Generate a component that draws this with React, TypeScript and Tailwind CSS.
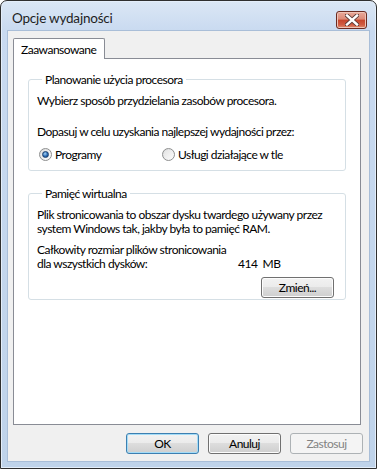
import React from "react";

const font = { fontFamily: 'Lato, "Noto Sans", sans-serif' };

function Radio({ checked, label }: { checked?: boolean; label: string }) {
  return (
    <label className="flex items-center gap-[3px]">
      <span className="relative flex h-[13px] w-[13px] items-center justify-center rounded-full border border-[#8e8f8f] bg-gradient-to-br from-[#d9dadb] to-[#ffffff]">
        <span className="h-[9px] w-[9px] rounded-full bg-gradient-to-br from-[#e4e4e4] to-[#fafafa] flex items-center justify-center">
          {checked && (
            <span className="h-[7px] w-[7px] rounded-full border border-[#1a3f6e] bg-[radial-gradient(circle_at_40%_35%,#a9d5f5,#2a6bb5_55%,#12407a)]" />
          )}
        </span>
      </span>
      <span>{label}</span>
    </label>
  );
}

function Button({
  children,
  def,
  disabled,
  className = "",
}: {
  children: React.ReactNode;
  def?: boolean;
  disabled?: boolean;
  className?: string;
}) {
  if (disabled) {
    return (
      <div
        className={`flex h-[21px] w-[73px] items-center justify-center rounded-[3px] border border-[#adb2b5] bg-[#f4f4f4] text-[#838383] ${className}`}
      >
        {children}
      </div>
    );
  }
  return (
    <div
      className={`flex h-[21px] w-[73px] items-center justify-center rounded-[3px] border ${
        def ? "border-[#3c7fb1] shadow-[inset_0_0_0_1px_#a4dcf7]" : "border-[#707070] shadow-[inset_0_0_0_1px_#fcfcfc]"
      } bg-[linear-gradient(#f2f2f2_0%,#ebebeb_49%,#dddddd_50%,#cfcfcf_100%)] text-black ${className}`}
    >
      {children}
    </div>
  );
}

export default function App() {
  return (
    <div style={font} className="h-[469px] w-[377px] whitespace-nowrap text-[12px] leading-[15px] tracking-[-0.5px] text-black">
      <div className="flex h-full w-full flex-col rounded-t-[7px] border border-[#2f2f2f] bg-[linear-gradient(#dbe7f5_0px,#c9daf0_30px,#bfd3ea_100%)] shadow-[inset_0_0_0_1px_#e4eefa]">
        {/* title bar */}
        <div className="flex h-[29px] shrink-0 items-center justify-between pl-[11px] pr-[9px]">
          <span className="mt-[4px] text-[13.5px] leading-[16px] tracking-[-0.2px] text-[#1e1e1e]">Opcje wydajności</span>
          <div className="mt-[8px] flex h-[18px] w-[31px] items-center justify-center rounded-[3px] border border-[#6b2a20] bg-[linear-gradient(#e9a99a_0%,#dc8a77_45%,#c6452b_50%,#d15c43_80%,#e08f6e_100%)] shadow-[inset_0_0_0_1px_#eec3b6]">
            <svg width="14" height="12" viewBox="0 0 14 12">
              <path d="M2 1.5 L12 10.5 M12 1.5 L2 10.5" stroke="#5a3a36" strokeWidth="4.2" strokeLinecap="square" />
              <path d="M2 1.5 L12 10.5 M12 1.5 L2 10.5" stroke="#ffffff" strokeWidth="2.4" strokeLinecap="square" />
            </svg>
          </div>
        </div>
        {/* client */}
        <div className="mx-[6px] mb-[6px] flex flex-1 flex-col border border-[#a9bed8] bg-[#f0f0f0] px-[5px] pt-[6px]">
          {/* tab strip */}
          <div className="flex h-[21px] items-end">
            <div className="relative z-10 -mb-px flex h-[21px] w-[92px] items-start rounded-t-[2px] border border-b-0 border-[#898c95] bg-white pl-[7px] pt-[3px]">
              Zaawansowane
            </div>
          </div>
          {/* panel */}
          <div className="flex h-[367px] w-[348px] flex-col border border-[#898c95] bg-white px-[14px] pt-[13px]">
            <fieldset className="h-[99px] rounded-[3px] border border-[#d5dfe5] px-[8px]">
              <legend className="ml-[5px] px-[3px]">Planowanie użycia procesora</legend>
              <div className="mt-[6px]">Wybierz sposób przydzielania zasobów procesora.</div>
              <div className="mt-[16px]">Dopasuj w celu uzyskania najlepszej wydajności przez:</div>
              <div className="mt-[8px] flex">
                <div className="ml-[2px] w-[123px]">
                  <Radio checked label="Programy" />
                </div>
                <Radio label="Usługi działające w tle" />
              </div>
            </fieldset>
            <fieldset className="mt-[15px] h-[114px] rounded-[3px] border border-[#d5dfe5] px-[8px]">
              <legend className="ml-[5px] px-[3px]">Pamięć wirtualna</legend>
              <div className="mt-[7px] leading-[14px]">
                Plik stronicowania to obszar dysku twardego używany przez
                <br />
                system Windows tak, jakby była to pamięć RAM.
              </div>
              <div className="mt-[7px] leading-[14px]">
                Całkowity rozmiar plików stronicowania
                <div className="flex">
                  <span className="w-[201px]">dla wszystkich dysków:</span>
                  <span>414&nbsp;&nbsp;MB</span>
                </div>
              </div>
              <div className="mt-[6px] flex justify-end pr-[3px]">
                <Button className="h-[19px] w-[72px]">Zmień...</Button>
              </div>
            </fieldset>
          </div>
          {/* buttons */}
          <div className="mt-[8px] flex justify-end gap-[9px] pr-[1px]">
            <Button def>OK</Button>
            <Button>Anuluj</Button>
            <Button disabled>Zastosuj</Button>
          </div>
        </div>
      </div>
    </div>
  );
}
